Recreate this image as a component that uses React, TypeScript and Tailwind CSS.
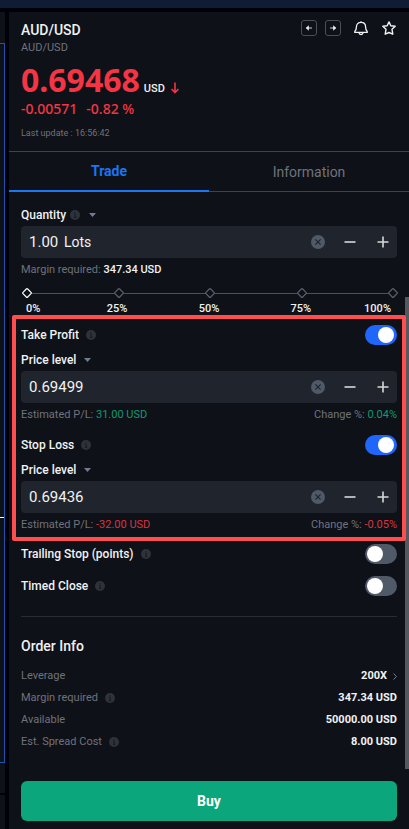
import { useState, type ReactNode } from 'react';
import clsx from 'clsx';

const stops = [0, 25, 50, 75, 100];

function InfoIcon() {
  return (
    <svg className="h-[10px] w-[10px] shrink-0" viewBox="0 0 10 10" aria-hidden="true">
      <circle cx="5" cy="5" r="5" fill="#2e323b" />
      <path d="M4.2 4.5h1v3M4 7.4h2.2" stroke="#13161c" strokeWidth="0.9" fill="none" />
      <circle cx="5" cy="2.8" r="0.6" fill="#13161c" />
    </svg>
  );
}

function Caret() {
  return (
    <svg className="h-1 w-[7px] shrink-0" viewBox="0 0 7 4" aria-hidden="true">
      <path d="M0 0h7L3.5 4z" fill="#727d92" />
    </svg>
  );
}

function Toggle({ id, defaultChecked = false }: { id: string; defaultChecked?: boolean }) {
  return (
    <input
      id={id}
      type="checkbox"
      role="switch"
      defaultChecked={defaultChecked}
      className="h-5 w-8 shrink-0 cursor-pointer appearance-none rounded-full bg-[#505967] p-[2px] before:block before:h-4 before:w-4 before:rounded-full before:bg-white checked:bg-[#2166fb] checked:before:ml-[11px]"
    />
  );
}

function ToggleRow({ id, label, on = false, className }: { id: string; label: string; on?: boolean; className?: string }) {
  return (
    <div className={clsx('flex h-5 items-center justify-between', className)}>
      <div className="flex items-center gap-[7px]">
        <label htmlFor={id} className="text-xs font-medium text-[#f1f2f4]">{label}</label>
        <InfoIcon />
      </div>
      <Toggle id={id} defaultChecked={on} />
    </div>
  );
}

function NumberField({ label, initial, unit }: { label: string; initial: string; unit?: string }) {
  const [value, setValue] = useState(initial);
  const digits = initial.includes('.') ? initial.split('.')[1].length : 0;

  function step(direction: number) {
    setValue((Number(value) + direction / 10 ** digits).toFixed(digits));
  }

  return (
    <div className="flex h-8 items-center rounded bg-[#20242c] px-2 text-[#f1f2f4]">
      <input
        aria-label={label}
        value={value}
        onChange={(e) => setValue(e.target.value)}
        className={clsx('min-w-0 bg-transparent text-[15px] outline-none', unit ? 'w-[35px]' : 'flex-1')}
      />
      {unit ? <span className="flex-1 text-sm">{unit}</span> : null}
      <button type="button" aria-label="Clear" onClick={() => setValue('')} className="mr-[19px]">
        <svg className="h-[14px] w-[14px]" viewBox="0 0 14 14">
          <circle cx="7" cy="7" r="7" fill="#505967" />
          <path d="M4.4 4.4l5.2 5.2M9.6 4.4L4.4 9.6" stroke="#20242c" strokeWidth="1.2" />
        </svg>
      </button>
      <button type="button" aria-label="Decrease" onClick={() => step(-1)} className="mr-[21px]">
        <svg className="h-3 w-3" viewBox="0 0 12 12">
          <path d="M0.5 6h11" stroke="#d6d7d9" strokeWidth="1.6" />
        </svg>
      </button>
      <button type="button" aria-label="Increase" onClick={() => step(1)}>
        <svg className="h-3 w-3" viewBox="0 0 12 12">
          <path d="M0.5 6h11M6 0.5v11" stroke="#d6d7d9" strokeWidth="1.6" />
        </svg>
      </button>
    </div>
  );
}

function Diamond({ active }: { active: boolean }) {
  return (
    <svg className="h-[10px] w-[10px]" viewBox="0 0 10 10" aria-hidden="true">
      <path
        d="M4.3 1Q5 0.3 5.7 1L9 4.3Q9.7 5 9 5.7L5.7 9Q5 9.7 4.3 9L1 5.7Q0.3 5 1 4.3Z"
        fill="#0e1117"
        stroke={active ? '#ffffff' : '#5a6270'}
        strokeWidth="1.2"
      />
    </svg>
  );
}

function QuantitySlider() {
  const [percent, setPercent] = useState(0);

  return (
    <div>
      <div className="relative flex h-3 items-center">
        <div className="absolute inset-x-1 top-[6px] h-px bg-[#4a5260]" />
        <div className="relative mr-[-1px] ml-[1px] flex flex-1 items-center justify-between">
          {stops.map((s) => <Diamond key={s} active={s === percent} />)}
        </div>
        <input
          type="range"
          aria-label="Quantity percent"
          min={0}
          max={100}
          step={25}
          value={percent}
          onChange={(e) => setPercent(Number(e.target.value))}
          className="absolute inset-0 w-full cursor-pointer opacity-0"
        />
      </div>
      <div className="mt-[3px] grid grid-cols-[6fr_11fr_11fr_11fr_6fr] text-center text-[11px] leading-[14px] font-medium text-[#f1f2f4]">
        {stops.map((s) => (
          <span key={s} className="first:pl-[5px] first:text-left last:pr-[6px] last:text-right">{s}%</span>
        ))}
      </div>
    </div>
  );
}

function PriceLevel({ label, price, pl, change, tone }: { label: string; price: string; pl: string; change: string; tone: string }) {
  return (
    <>
      <button type="button" className="mt-[7px] mb-[3px] flex items-center gap-2 text-xs font-medium text-[#f1f2f4]">
        Price level
        <Caret />
      </button>
      <NumberField label={label} initial={price} />
      <div className="mt-1 flex justify-between text-[11px] leading-4 text-[#6e737d]">
        <p>Estimated P/L: <span className={tone}>{pl}</span></p>
        <p>Change %: <span className={tone}>{change}</span></p>
      </div>
    </>
  );
}

function OrderRow({ label, info = false, children }: { label: string; info?: boolean; children: ReactNode }) {
  return (
    <div className="flex h-[22px] items-center justify-between text-[11px]">
      <dt className="flex items-center gap-[7px] text-[#6e737d]">
        {label}
        {info ? <InfoIcon /> : null}
      </dt>
      <dd className="flex items-center gap-[6px] font-bold text-[#f1f2f4]">{children}</dd>
    </div>
  );
}

function InstrumentHeader() {
  return (
    <header className="border-b border-[#3f434d] px-3 pt-2 pb-[11px]">
      <div className="flex items-start justify-between">
        <div>
          <h1 className="text-sm font-medium text-[#f1f2f4]">AUD/USD</h1>
          <p className="text-[11px] leading-4 text-[#6e737d]">AUD/USD</p>
        </div>
        <div className="flex items-center">
          <button type="button" aria-label="Previous" className="mr-2">
            <svg className="h-4 w-4" viewBox="0 0 16 16" fill="none">
              <rect x="0.5" y="0.5" width="15" height="15" rx="2.5" stroke="#4a4e59" />
              <path d="M5.5 8H11" stroke="#a5a7ab" strokeWidth="1.3" />
              <path d="M7.8 5.2v5.6L4.8 8z" fill="#f1f2f4" />
            </svg>
          </button>
          <button type="button" aria-label="Next" className="mr-3">
            <svg className="h-4 w-4" viewBox="0 0 16 16" fill="none">
              <rect x="0.5" y="0.5" width="15" height="15" rx="2.5" stroke="#4a4e59" />
              <path d="M5 8h5.5" stroke="#a5a7ab" strokeWidth="1.3" />
              <path d="M8.2 5.2v5.6l3-2.8z" fill="#f1f2f4" />
            </svg>
          </button>
          <button type="button" aria-label="Price alert" className="mr-3">
            <svg className="h-4 w-4" viewBox="0 0 16 16" fill="none" stroke="#f1f2f4" strokeWidth="1.3">
              <path d="M8 1.2v1M3.4 7C3.4 4.2 5.2 2.3 8 2.3S12.6 4.2 12.6 7c0 2.7.6 3.6 1.6 4.5v.8H1.8v-.8C2.8 10.6 3.4 9.7 3.4 7z" />
              <path d="M5.8 12.5c.2 1.3 1 2 2.2 2s2-.7 2.2-2" />
            </svg>
          </button>
          <button type="button" aria-label="Add to favourites">
            <svg className="h-4 w-4" viewBox="0 0 16 16" fill="none" stroke="#f1f2f4" strokeWidth="1.4" strokeLinejoin="round">
              <path d="M8 1.9l1.8 3.8 4.4.6-3.2 3 .8 4.9L8 12.500l-3.800 1.700.8-4.900-3.200-3 4.400-.6z" />
            </svg>
          </button>
        </div>
      </div>
      <p className="mt-1 flex items-baseline">
        <strong className="font-['Noto_Sans',sans-serif] text-[32px] leading-10 font-bold text-[#f63544]">0.69468</strong>
        <span className="ml-1 text-[11px] font-medium text-[#f1f2f4]">USD</span>
        <svg className="mb-[6px] ml-[6px] h-3 w-2 self-end" viewBox="0 0 8 12" fill="none" stroke="#f63544" strokeWidth="1.6" aria-hidden="true">
          <path d="M4 0.5v10M0.6 7L4 10.600 7.400 7" />
        </svg>
      </p>
      <p className="flex gap-[9px] font-['Noto_Sans',sans-serif] text-sm leading-[18px] font-medium text-[#f63544]">
        <span>-0.00571</span>
        <span>-0.82 %</span>
      </p>
      <p className="mt-2 text-[9px] leading-[14px] text-[#6e737d]">Last update : 16:56:42</p>
    </header>
  );
}

export default function App() {
  return (
    <div className="flex min-h-screen flex-col bg-[#00000a] font-[Roboto,sans-serif]">
      <div className="mb-1 h-2 bg-[#0e1d33]" />
      <div className="flex flex-1 gap-1">
        {/* edge of the chart pane */}
        <div className="flex w-[5px] shrink-0 flex-col">
          <div className="flex-1 bg-[#0e1117] pt-[31px] pb-[30px]">
            <div className="h-full border-y border-r border-[#1b55ae] pt-[473px]">
              <div className="h-px bg-white" />
            </div>
          </div>
          <div className="mt-[2px] h-[34px] bg-[#0e1117]" />
        </div>

        <main className="relative min-w-0 flex-1 bg-[#0e1117]">
          <InstrumentHeader />

          <div role="tablist" className="grid h-10 grid-cols-2 text-sm">
            <button type="button" role="tab" aria-selected="true" className="border-b-2 border-[#1a76f3] font-bold text-[#1a76f3]">Trade</button>
            <button type="button" role="tab" aria-selected="false" className="border-b border-[#3f434d] text-[#6e737d]">Information</button>
          </div>

          <div className="absolute top-[285px] right-0 h-[472px] w-1 bg-[#55585e]" />

          <form className="px-3 pt-[15px] pb-2" onSubmit={(e) => e.preventDefault()}>
            <button type="button" className="mb-[3px] flex items-center text-xs font-medium text-[#f1f2f4]">
              Quantity
              <span className="mr-[9px] ml-1"><InfoIcon /></span>
              <Caret />
            </button>
            <NumberField label="Quantity" initial="1.00" unit="Lots" />
            <p className="mt-1 mb-[9px] text-[11px] leading-4 text-[#6e737d]">
              Margin required: <span className="font-medium text-[#f1f2f4]">347.34 USD</span>
            </p>
            <QuantitySlider />

            <section className="relative mx-[-9px] mt-[-1px] rounded-xs border-4 border-[#fe4e4e] px-[5px] pt-[6px] pb-1">
              <ToggleRow id="take-profit" label="Take Profit" on />
              <PriceLevel label="Take profit price" price="0.69499" pl="31.00 USD" change="0.04%" tone="text-[#0e9a74]" />
              <ToggleRow id="stop-loss" label="Stop Loss" on className="mt-3" />
              <PriceLevel label="Stop loss price" price="0.69436" pl="-32.00 USD" change="-0.05%" tone="text-[#dc3340]" />
            </section>

            <ToggleRow id="trailing-stop" label="Trailing Stop (points)" className="mt-[3px]" />
            <ToggleRow id="timed-close" label="Timed Close" className="mt-3" />

            <section className="mt-5 border-t border-[#272b33] pt-[17px]">
              <h2 className="text-sm leading-6 font-medium text-[#f1f2f4]">Order Info</h2>
              <dl className="mt-[7px]">
                <OrderRow label="Leverage">
                  200X
                  <svg className="h-[7px] w-1" viewBox="0 0 4 7" fill="none" stroke="#727d92" aria-hidden="true">
                    <path d="M0.5 0.5l3 3-3 3" />
                  </svg>
                </OrderRow>
                <OrderRow label="Margin required" info>347.34 USD</OrderRow>
                <OrderRow label="Available">50000.00 USD</OrderRow>
                <OrderRow label="Est. Spread Cost" info>8.00 USD</OrderRow>
              </dl>
            </section>

            <button type="submit" className="mt-7 h-10 w-full rounded-md bg-[#0ca67c] text-sm font-bold text-white">Buy</button>
          </form>
        </main>
      </div>
    </div>
  );
}
